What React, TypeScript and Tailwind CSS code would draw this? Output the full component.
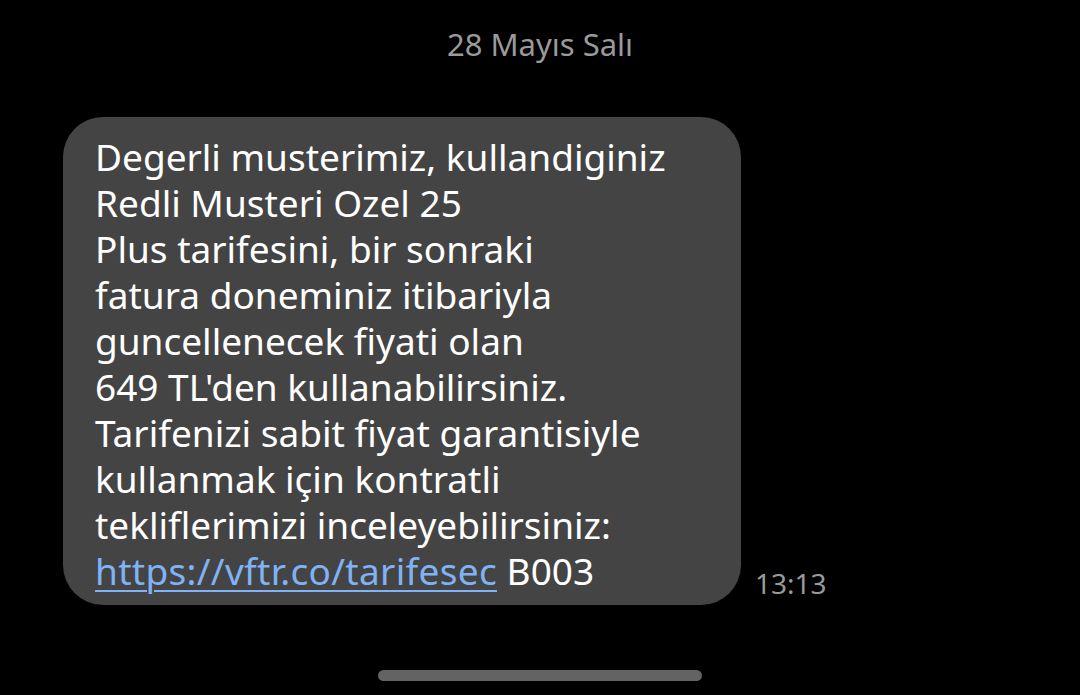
const lines = [
  "Degerli musterimiz, kullandiginiz",
  "Redli Musteri Ozel 25",
  "Plus tarifesini, bir sonraki",
  "fatura doneminiz itibariyla",
  "guncellenecek fiyati olan",
  "649 TL'den kullanabilirsiniz.",
  "Tarifenizi sabit fiyat garantisiyle",
  "kullanmak için kontratli",
  "tekliflerimizi inceleyebilirsiniz:",
];

export default function App() {
  return (
    <div
      className="w-[1080px] h-[695px] bg-black flex flex-col overflow-hidden"
      style={{ fontFamily: '"Noto Sans", "Open Sans", sans-serif' }}
    >
      {/* Date header */}
      <div className="pt-[26px] h-[117px] text-center text-[31px] leading-[36px] text-[#9a9a9a]">
        28 Mayıs Salı
      </div>

      {/* Message row */}
      <div className="flex items-end pl-[63px] gap-[14px]">
        <div className="w-[678px] rounded-[40px] bg-[#444444] pl-[32px] pr-[20px] pt-[17px] pb-[11px] text-[37px] leading-[46px] text-white">
          {lines.map((l) => (
            <div key={l}>{l}</div>
          ))}
          <div>
            <span className="text-[#7fb3f5] underline decoration-[2px] underline-offset-[5px] tracking-[0.3px]">
              https://vftr.co/tarifesec
            </span>{" "}
            B003
          </div>
        </div>
        <div className="text-[28px] leading-[36px] text-[#9a9a9a] pb-[4px]">13:13</div>
      </div>

      {/* Home indicator */}
      <div className="flex-1 flex items-end justify-center pb-[14px]">
        <div className="w-[324px] h-[11px] rounded-full bg-[#636363]" />
      </div>
    </div>
  );
}
